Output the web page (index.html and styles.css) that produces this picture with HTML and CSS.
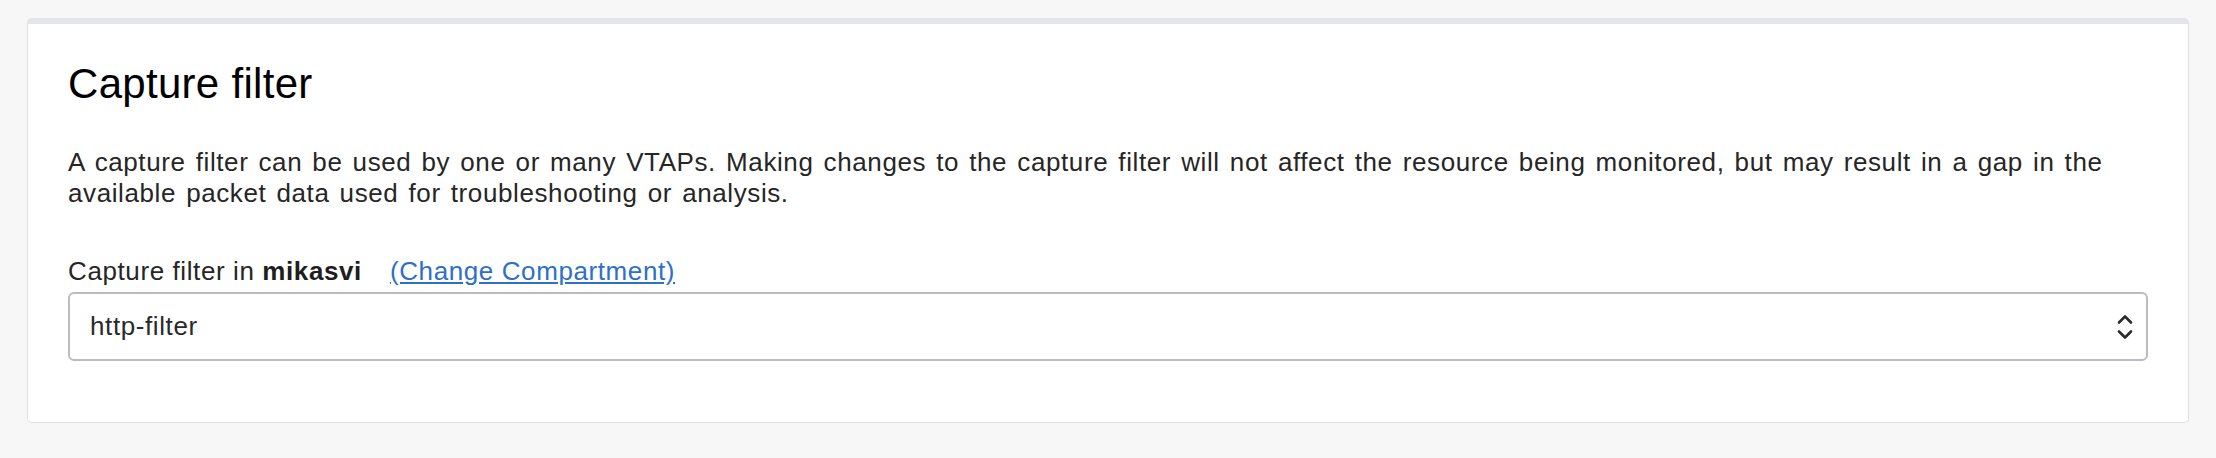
FILE: index.html
```html
<!DOCTYPE html>
<html lang="en">
<head>
<meta charset="utf-8">
<title>Capture filter</title>
<link rel="stylesheet" href="styles.css">
</head>
<body>
<section class="card">
  <h2 class="title">Capture filter</h2>
  <p class="desc">A capture filter can be used by one or many VTAPs. Making changes to the capture filter will not affect the resource being monitored, but may result in a gap in the available packet data used for troubleshooting or analysis.</p>
  <div class="field">
    <div class="label">Capture filter in <b>mikasvi</b><a class="link" href="#">(Change Compartment)</a></div>
    <div class="select">
      <span class="value">http-filter</span>
      <svg class="chev" width="18" height="30" viewBox="0 0 18 30" aria-hidden="true">
        <path d="M3 10.5 L9 4.5 L15 10.5" fill="none" stroke="#2a2a2a" stroke-width="2.6" stroke-linecap="round" stroke-linejoin="round"/>
        <path d="M3 19.5 L9 25.5 L15 19.5" fill="none" stroke="#2a2a2a" stroke-width="2.6" stroke-linecap="round" stroke-linejoin="round"/>
      </svg>
    </div>
  </div>
</section>
</body>
</html>
```
FILE: styles.css
```css
html, body {
  margin: 0;
  padding: 0;
  background: #f7f7f7;
}
body {
  padding: 18px 27px 35px;
  font-family: "Liberation Sans", Arial, sans-serif;
  color: #262626;
}
.card {
  background: #ffffff;
  border: 1px solid #e1e1e3;
  border-top: 6px solid #e4e5e8;
  border-radius: 5px;
  padding: 35px 40px 61px;
}
.title {
  margin: 0;
  font-size: 42px;
  line-height: 50px;
  font-weight: normal;
  letter-spacing: 0.3px;
  color: #000000;
}
.desc {
  margin: 38px 0 0;
  font-size: 26px;
  line-height: 31px;
  letter-spacing: 0.6px;
  word-spacing: 2.3px;
}
.field {
  margin-top: 47px;
}
.label {
  font-size: 26px;
  line-height: 31px;
  letter-spacing: 0.6px;
}
.label b {
  font-weight: bold;
  color: #1e1e1e;
}
.link {
  margin-left: 28px;
  color: #2d6fcb;
  text-decoration: underline;
}
.select {
  margin-top: 5px;
  height: 65px;
  border: 2px solid #b9bcc1;
  border-radius: 6px;
  display: flex;
  align-items: center;
  justify-content: space-between;
  padding: 0 12px 0 20px;
  font-size: 26px;
  letter-spacing: 0.6px;
}
.value {
  color: #2a2a2a;
}
.chev {
  display: block;
}
```
